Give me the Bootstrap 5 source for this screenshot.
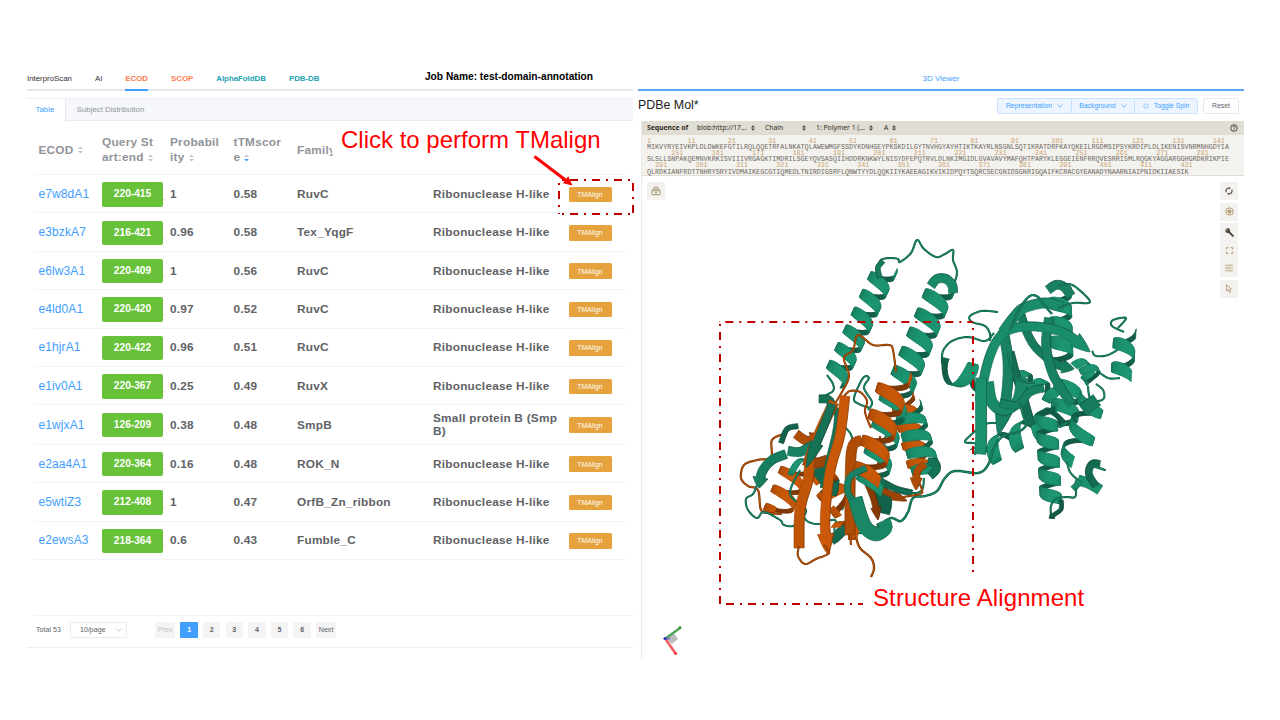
<!DOCTYPE html>
<html lang="en">
<head>
<meta charset="utf-8">
<meta name="viewport" content="width=device-width, initial-scale=1">
<title>Domain annotation</title>
<link href="https://cdn.jsdelivr.net/npm/bootstrap@5.3.0/dist/css/bootstrap.min.css" rel="stylesheet">
<style>
body{width:1280px;height:720px;overflow:hidden;background:#fff;font-family:"Liberation Sans",Arial,sans-serif;font-size:7.85px;line-height:1.2;color:#303133}
.page{width:1280px;height:720px;padding:68px 36px 0 27px}
.pane-l{width:606px}
.pane-r{width:606px;margin-left:5px}
.tabs-main{height:22.5px;gap:23px;border-bottom:2px solid #e4e7ed;line-height:21px}
.tabs-main a,.tabs-sub a{text-decoration:none;white-space:nowrap}
.tabs-main a:not(.or):not(.te),.tabs-main a:not(.or):not(.te):hover{color:#303133}
.tabs-main a.or{color:#ff7a4d;font-weight:700}
.tabs-main a.te{color:#22a2b2;font-weight:700}
.tabs-main .on{border-bottom:2px solid #409eff;height:22.5px}
.jobname{font-size:10.2px;font-weight:700;color:#000;line-height:17px;margin-left:82.5px}
.tabs-sub{margin-top:7px;height:23.5px;background:#f5f7fa;border-top:1px solid #eceff4;border-bottom:1px solid #e9ecf2;line-height:22.5px}
.tabs-sub a{color:#909399;padding-left:11px}
.tabs-sub a.on{background:#fff;color:#409eff;padding:0 10.5px 0 8.5px;height:23.5px;border-right:1px solid #e4e7ed}
.results{width:592px;margin:0 0 0 6px;table-layout:fixed;--bs-table-bg:transparent;font-size:11.8px;letter-spacing:.24px;font-weight:700;color:#606266;line-height:13px;border-collapse:separate;border-spacing:0}
.results>thead>tr>th{height:54px;padding:5px 0 0 5.5px;color:#909399;line-height:15px;vertical-align:middle;border:0;border-bottom:1px solid #f3f4f8;white-space:nowrap}
.results>tbody>tr>td{height:38.4px;padding:1.4px 0 0 5.5px;color:#606266;vertical-align:middle;border:0;border-bottom:1px solid #f3f4f8;white-space:nowrap}
.results tbody tr.tall td{height:39.4px}
.results .sup{padding-left:6px!important}
.results a.hit{font-weight:400;color:#409eff;font-size:12px;letter-spacing:.1px;text-decoration:none}
.span-tag{display:inline-block;width:61px;height:24.5px;line-height:24px;background:#67c23a;border-radius:2px;color:#fff;font-size:10.2px;letter-spacing:0;text-align:center;vertical-align:middle}
.dotty{font-size:8px;letter-spacing:0;color:#a9acb2;font-weight:400;vertical-align:-3px}
.tm{width:43px;height:15.5px;padding:0;line-height:15px;font-size:6.8px;letter-spacing:.05px;color:#fff;background:#e6a23c;border:0;border-radius:1.5px;display:block;--bs-btn-color:#fff}
.sorter{width:5px;height:8px;margin-left:4px;vertical-align:-.5px}
.pager{margin:55px 0 0 6px;width:600px;border-top:1px solid #f3f4f8;height:32.5px;font-size:7.1px;color:#606266;padding:6.2px 0 0 3px}
.pager span{height:15.5px;line-height:16px}
.pg{background:#f4f4f5;border-radius:1px;text-align:center;width:17.5px;margin-right:5.1px;font-weight:700}
.pg.wide{width:20.3px;font-weight:400}
.pg.cur{background:#409eff;color:#fff}
.sel{border:1px solid #eaecf0;width:57px;margin-left:8.5px;margin-right:28px;padding:0 4px 0 9px;line-height:14px!important;border-radius:2px}
.bottomline{height:1px;background:#eceef1}
.viewtab{height:22.5px;border-bottom:2px solid #58a7fb;color:#409eff;font-size:8px;line-height:21px}
.toolbar-r{height:30.5px;padding:7.5px 5px 0 0}
.toolbar-r h1{font-size:12.4px;font-weight:400;color:#222;margin:0;line-height:15px}
.btn-mini{height:16px;padding:0;font-size:6.8px;line-height:14px;border:1px solid #c6e2ff;border-radius:1.5px;background:#ecf5ff;color:#409eff;display:flex;align-items:center;justify-content:center;gap:5px}
.btn-mini.plain{background:#fff;border-color:#e6e8ec;color:#606266;width:36px;margin-left:5px}
.mol{margin-left:3px;width:603px;height:539px;border-left:1px solid #ecebe8;position:relative}
.seqhead{height:13.5px;background:#e0ddd4;font-family:"Noto Sans","Open Sans",sans-serif;font-size:6.8px;color:#332b1f;padding-left:5px}
.seqhead i{font-style:normal}
.seqbody{height:41.5px;background:#f3f2ee;border-bottom:1px solid #e0ddd4;padding:3.2px 0 0 5px;font-family:"Liberation Mono",monospace;font-size:6.745px}
.seqbody div{white-space:pre;height:6.2px;line-height:6.2px;color:#6e695f}
.seqbody .nr{color:#cba273}
.scene{display:block;position:absolute;left:0;top:55px}
.tools{position:absolute;left:578px;top:61px;width:18px}
.tools div,.lockbtn{background:#f3f2ee;display:flex;flex-direction:column;align-items:center;justify-content:space-around}
.lockbtn{position:absolute;left:5px;top:61px;width:18px;height:18px}
.over{position:absolute;left:0;top:0;pointer-events:none}
.note{position:absolute;color:#f00;font-size:24px;line-height:28px;white-space:nowrap;background:#fff}
</style>
</head>
<body>
<main class="page d-flex align-items-start position-relative">
  <section class="pane-l">
    <nav class="tabs-main d-flex">
      <a href="#">InterproScan</a><a href="#">AI</a><a href="#" class="or on">ECOD</a><a href="#" class="or">SCOP</a><a href="#" class="te">AlphaFoldDB</a><a href="#" class="te">PDB-DB</a>
      <span class="jobname">Job Name: test-domain-annotation</span>
    </nav>
    <nav class="tabs-sub d-flex"><a href="#" class="on">Table</a><a href="#">Subject Distribution</a></nav>
    <table class="table results">
      <colgroup><col style="width:63.5px"><col style="width:68px"><col style="width:63.5px"><col style="width:63.5px"><col style="width:135.5px"><col style="width:136px"><col></colgroup>
      <thead><tr>
        <th>ECOD<svg class="sorter" viewBox="0 0 5 8"><path d="M0 3L2.5 .5 5 3zM0 5L2.5 7.5 5 5z" fill="#c0c4cc"/></svg></th>
        <th>Query St<br>art:end<svg class="sorter" viewBox="0 0 5 8"><path d="M0 3L2.5 .5 5 3zM0 5L2.5 7.5 5 5z" fill="#c0c4cc"/></svg></th>
        <th>Probabil<br>ity<svg class="sorter" viewBox="0 0 5 8"><path d="M0 3L2.5 .5 5 3zM0 5L2.5 7.5 5 5z" fill="#c0c4cc"/></svg></th>
        <th>tTMscor<br>e<svg class="sorter" viewBox="0 0 5 8"><path d="M0 3L2.5 .5 5 3z" fill="#c0c4cc"/><path d="M0 5L2.5 7.5 5 5z" fill="#409eff"/></svg></th>
        <th>Family</th><th></th><th></th>
      </tr></thead>
      <tbody id="rows"></tbody>
    </table>
    <div class="pager d-flex">
      <span style="width:25.5px">Total 53</span>
      <span class="sel d-flex justify-content-between align-items-center">10/page<svg width="6" height="4" viewBox="0 0 6 4"><path d="M.5 .5L3 3.2 5.5 .5" fill="none" stroke="#c0c4cc" stroke-width=".8"/></svg></span>
      <span class="pg wide" style="color:#c0c4cc">Prev</span><span class="pg cur">1</span><span class="pg">2</span><span class="pg">3</span><span class="pg">4</span><span class="pg">5</span><span class="pg">6</span><span class="pg wide">Next</span>
    </div>
    <div class="bottomline"></div>
  </section>

  <section class="pane-r">
    <div class="viewtab text-center">3D Viewer</div>
    <div class="toolbar-r d-flex">
      <h1 class="me-auto">PDBe Mol*</h1>
      <div class="btn-group">
        <button class="btn btn-mini" style="width:75px">Representation<svg width="6" height="4" viewBox="0 0 6 4"><path d="M.5 .5L3 3.2 5.5 .5" fill="none" stroke="#409eff" stroke-width=".7"/></svg></button>
        <button class="btn btn-mini" style="width:64px">Background<svg width="6" height="4" viewBox="0 0 6 4"><path d="M.5 .5L3 3.2 5.5 .5" fill="none" stroke="#409eff" stroke-width=".7"/></svg></button>
        <button class="btn btn-mini" style="width:64px"><svg width="6" height="6" viewBox="0 0 6 6"><circle cx="3" cy="3" r="2.1" fill="none" stroke="#409eff" stroke-width=".9" stroke-dasharray="1 .65"/></svg>Toggle Spin</button>
      </div>
      <button class="btn btn-mini plain">Reset</button>
    </div>
    <div class="mol">
      <div class="seqhead d-flex align-items-center" id="seqhead">
        <b style="width:50px">Sequence of</b><i style="width:54px">blob:http://17...</i><svg width="4" height="6" viewBox="0 0 4 6"><path d="M0 2.4L2 .2 4 2.4zM0 3.6L2 5.8 4 3.6z" fill="#4a4335"/></svg>
        <i style="width:37px;margin-left:10px">Chain</i><svg width="4" height="6" viewBox="0 0 4 6"><path d="M0 2.4L2 .2 4 2.4zM0 3.6L2 5.8 4 3.6z" fill="#4a4335"/></svg>
        <i style="width:53px;margin-left:10px">1: Polymer 1 (...</i><svg width="4" height="6" viewBox="0 0 4 6"><path d="M0 2.4L2 .2 4 2.4zM0 3.6L2 5.8 4 3.6z" fill="#4a4335"/></svg>
        <i style="width:8px;margin-left:11px">A</i><svg width="4" height="6" viewBox="0 0 4 6"><path d="M0 2.4L2 .2 4 2.4zM0 3.6L2 5.8 4 3.6z" fill="#4a4335"/></svg>
        <svg class="ms-auto" style="margin-right:6px" width="8" height="8" viewBox="0 0 8 8" fill="none" stroke="#332b1f" stroke-width=".8"><circle cx="4" cy="4" r="3.3"/><path d="M2.9 3.2a1.1 1.1 0 1 1 1.6 1c-.4.2-.5.4-.5.8M4 5.6v.7"/></svg>
      </div>
      <div class="seqbody" id="seq"></div>
      <svg class="scene" width="602" height="484" viewBox="642 176 602 484"><g id="protein"></g>
        <path d="M665 638l8-6 5 7-6 5z" fill="#bbb"/><path d="M665.5 638.5L680 628" stroke="#55a558" stroke-width="2.4"/><path d="M665.5 639L675.5 653.5" stroke="#f06060" stroke-width="2.6"/><path d="M664 638.7h6" stroke="#6a6ad0" stroke-width="1.6"/><circle cx="665" cy="638.5" r="1.6" fill="#3434b8"/><circle cx="680" cy="627.7" r="1.4" fill="#2a8a30"/><circle cx="675.6" cy="653.6" r="1.5" fill="#e83c3c"/>
      </svg>
      <div class="lockbtn"><svg width="10" height="10" viewBox="0 0 10 10" fill="none" stroke="#a89878"><path d="M2.8 3V2a1.4 1.4 0 0 1 1.4-1h1.6A1.4 1.4 0 0 1 7.2 2v1M1.2 4.6L2.5 3h5l1.3 1.6"/><path d="M1 4.7h8v4H1z"/><path d="M5 5.3v2.6M3.8 6.6h2.4" stroke-width=".9"/></svg></div>
      <div class="tools">
        <div style="height:18px"><svg width="8" height="8" viewBox="0 0 8 8" fill="none" stroke="#4a4335" stroke-width="1.1"><path d="M1.2 5.2A3 3 0 0 1 4.6 1.1M6.8 2.8A3 3 0 0 1 3.4 6.9"/><path d="M4.2 0l1.6 1.3-1.6 1.3zM3.8 8L2.2 6.7l1.6-1.3z" fill="#4a4335" stroke="none"/></svg></div>
        <div style="height:18px;margin-top:2.5px"><svg width="9" height="9" viewBox="0 0 9 9" fill="none" stroke="#b0946c" stroke-width=".9"><circle cx="4.5" cy="4.5" r="3.7"/><circle cx="4.5" cy="4.5" r="1.4" fill="#b0946c"/><path d="M2 3.4v2.2M7 3.4v2.2M3.4 2h2.2M3.4 7h2.2" stroke-width=".5"/></svg></div>
        <div style="height:54px;margin-top:2.5px">
          <svg width="9" height="9" viewBox="0 0 9 9"><circle cx="2.7" cy="2.7" r="2.4" fill="#4a4335"/><path d="M3.5 3.5l4.4 4.4" stroke="#4a4335" stroke-width="1.9" stroke-linecap="round"/><path d="M.5 .8L2.4 2.6" stroke="#f3f2ee" stroke-width=".9"/></svg>
          <svg width="7" height="7" viewBox="0 0 7 7" fill="none" stroke="#b0946c" stroke-width=".9"><path d="M.5 2.3V.6h1.8M4.7 .6h1.8v1.7M6.5 4.7v1.7H4.7M2.3 6.4H.5V4.7"/></svg>
          <svg width="8" height="8" viewBox="0 0 8 8" fill="none" stroke="#b0946c" stroke-width=".8"><path d="M0 1.3h4.5M5.8 1.3H8M0 4h2M3.4 4H8M0 6.7h3.6M5 6.7h3M5.2 .2v2.2M2.7 2.9v2.2M4.4 5.6v2.2"/></svg>
        </div>
        <div style="height:18px;margin-top:2.5px"><svg width="8" height="9" viewBox="0 0 8 9" fill="none" stroke="#b0946c" stroke-width=".8"><path d="M1.5 .8v6.2l1.6-1.4 1.2 2.8 1.3-.6-1.2-2.6h2.1z"/></svg></div>
      </div>
    </div>
  </section>

  <div class="note" style="left:332px;top:126px;padding-left:9px">Click to perform TMalign</div>
  <div class="note" style="left:873px;top:584px;letter-spacing:.1px">Structure Alignment</div>
  <svg class="over" width="1280" height="720" fill="none" stroke="#c00000" stroke-width="2" stroke-dasharray="8 6 2 6">
    <path d="M719 322H973" stroke-dashoffset="15.7"/><path d="M973 322V573" stroke-dashoffset="8"/><path d="M720 322V604" stroke-dashoffset="12"/><path d="M720 604H863" stroke-dashoffset="16"/>
    <path d="M559 180H633" stroke-dashoffset="11"/><path d="M559 214H633" stroke-dashoffset="11"/><path d="M559 180V214" stroke-dashoffset="11"/><path d="M633 180V214" stroke-dashoffset="19"/>
    <path d="M534.5 156.5L566 180.5" stroke="#f00" stroke-width="3" stroke-dasharray="none"/><path d="M572.5 185.5L563 183.2 568.2 176.2z" fill="#f00" stroke="none"/>
  </svg>
</main>
<script src="https://cdn.jsdelivr.net/npm/bootstrap@5.3.0/dist/js/bootstrap.bundle.min.js"></script>
<script>
const hits=[["e7w8dA1","220-415","1","0.58","RuvC"],["e3bzkA7","216-421","0.96","0.58","Tex_YqgF"],["e6lw3A1","220-409","1","0.56","RuvC"],["e4ld0A1","220-420","0.97","0.52","RuvC"],["e1hjrA1","220-422","0.96","0.51","RuvC"],["e1iv0A1","220-367","0.25","0.49","RuvX"],["e1wjxA1","126-209","0.38","0.48","SmpB","Small protein B (Smp<br>B)"],["e2aa4A1","220-364","0.16","0.48","ROK_N"],["e5wtiZ3","212-408","1","0.47","OrfB_Zn_ribbon"],["e2ewsA3","218-364","0.6","0.43","Fumble_C"]];
document.getElementById("rows").innerHTML=hits.map(h=>`<tr class="${h[5]?"tall":""}"><td><a class="hit" href="#">${h[0]}</a></td><td><span class="span-tag">${h[1]}</span><span class="dotty">.</span></td><td>${h[2]}</td><td>${h[3]}</td><td>${h[4]}</td><td class="sup">${h[5]||"Ribonuclease H-like"}</td><td><button class="btn tm">TMAlign</button></td></tr>`).join("");

const seq=["MIKVYRYEIVKPLDLDWKEFGTILRQLQQETRFALNKATQLAWEWMGFSSDYKDNHGEYPKSKDILGYTNVHGYAYHTIKTKAYRLNSGNLSQTIKRATDRFKAYQKEILRGDMSIPSYKRDIPLDLIKENISVNRMNHGDYIA","SLSLLSNPAKQEMNVKRKISVIIIVRGAGKTIMDRILSGEYQVSASQIIHDDRKNKWYLNISYDFEPQTRVLDLNKIMGIDLGVAVAVYMAFQHTPARYKLEGGEIENFRRQVESRRISMLRQGKYAGGARGGHGRDKRIKPIE","QLRDKIANFRDTTNHRYSRYIVDMAIKEGCGTIQMEDLTNIRDIGSRFLQNWTYYDLQQKIIYKAEEAGIKVIKIDPQYTSQRCSECGNIDSGNRIGQAIFKCRACGYEANADYNAARNIAIPNIDKIIAESIK"];
document.getElementById("seq").innerHTML=seq.map((s,k)=>{let n="";for(let i=0;i<s.length;i++){const r=k*144+i+1;if(r%10===1)n=n.padEnd(i)+r}return`<div class="nr">${n}</div><div>${s}</div>`}).join("");

/* ribbon cartoon: coils are tubes, sheets are arrows, helices are shaded coiled bands */
const G=[28,152,116],O=[206,90,8];
const out=[];
const col=(c,k)=>`rgb(${c.map(v=>Math.round(Math.min(255,v*k))).join()})`;
const f=v=>v.toFixed(1);
function smooth(p,n=8){const r=[];for(let i=0;i<p.length-1;i++){const a=p[i-1]||p[i],b=p[i],c=p[i+1],d=p[i+2]||c;for(let j=0;j<n;j++){const t=j/n;r.push([0,1].map(q=>.5*(2*b[q]+(c[q]-a[q])*t+(2*a[q]-5*b[q]+4*c[q]-d[q])*t*t+(3*b[q]-a[q]-3*c[q]+d[q])*t*t*t)))}}r.push(p[p.length-1]);return r}
const pts=s=>s.split(" ").map(a=>a.split(",").map(Number));
function coil(c,s,w=2.1){const d="M"+smooth(pts(s)).map(a=>f(a[0])+" "+f(a[1])).join("L");out.push(`<path d="${d}" fill="none" stroke="${col(c,.58)}" stroke-width="${w}" stroke-linejoin="round"/><path d="${d}" fill="none" stroke="${col(c,.9)}" stroke-width="${w*.5}"/>`)}
function sheet(c,s,w,arrow=1,k=.93){const p=smooth(pts(s),6),n=p.length,L=[],R=[];
 p.forEach((a,i)=>{const q=p[Math.min(i+1,n-1)],o=p[Math.max(i-1,0)];let dx=q[0]-o[0],dy=q[1]-o[1];const m=Math.hypot(dx,dy)||1;dx/=m;dy/=m;let h=w/2;
  if(arrow&&i>=n-5){if(i===n-5){L.push([a[0]-dy*h,a[1]+dx*h]);R.push([a[0]+dy*h,a[1]-dx*h])}h=w*.85*(n-1-i)/4}
  L.push([a[0]-dy*h,a[1]+dx*h]);R.push([a[0]+dy*h,a[1]-dx*h])});
 const T=a=>a.map(v=>f(v[0])+" "+f(v[1])).join("L");
 out.push(`<path d="M${T(L.concat(R.slice().reverse()))}Z" fill="${col(c,k)}" stroke="${col(c,k*.8)}" stroke-width=".6"/><path d="M${T(R)}" fill="none" stroke="${col(c,k*.65)}" stroke-width="1" opacity=".55"/>`)}
function helix(c,x1,y1,x2,y2,turns,r,w,ph=0,tilt=-.25){const L=Math.hypot(x2-x1,y2-y1),ux=(x2-x1)/L,uy=(y2-y1)/L,vx=-uy,vy=ux,N=Math.round(turns*30),q=[];
 const P=(t,o)=>{const a=ph+t*turns*2*Math.PI,sn=Math.sin(a),z=t*L+o*w/2*(.72+.33*sn)+tilt*r*sn,s=r*Math.cos(a);return[x1+ux*z+vx*s,y1+uy*z+vy*s]};
 for(let i=0;i<N;i++){const t=i/N,u=(i+1.15)/N,a=ph+(t+u)/2*turns*2*Math.PI;q.push({z:Math.sin(a),e:Math.cos(a),a:[P(t,-1),P(u,-1),P(u,1),P(t,1)]})}
 q.sort((a,b)=>a.z-b.z).forEach(g=>{const k=g.z<0?.6+.08*(1+g.z):.7+.27*Math.sqrt(g.z)-.04*g.e,d=g.a.map(v=>f(v[0])+" "+f(v[1])),cc=col(c,k);
  out.push(`<path d="M${d.join("L")}Z" fill="${cc}" stroke="${cc}" stroke-width=".6"/><path d="M${d[0]}L${d[1]}M${d[2]}L${d[3]}" stroke="${col(c,k*.8)}" stroke-width=".5"/>`)})}

/* right domain */
coil(G,"998,312 982,311 970,316 972,322 985,326 990,334 990,341");
coil(G,"942,364 943,351 952,341 968,337 985,341 994,333");
coil(G,"998,423 985,424 973,433 965,442 976,444 975,455");
helix(G,1060,292,1062,362,3.6,11,13,2.8);
helix(G,1078,364,1093,378,1.2,8,8,1);
helix(G,1018,378,1056,396,2.2,9,11,1);
helix(G,1068,386,1063,425,2,14,12,0);
helix(G,1092,398,1074,458,2.2,14,11,.3,.3);
helix(G,980,458,1060,414,3.6,12,12,3,-.4);
helix(G,1046,408,1051,502,5.2,10.5,12,2.8,.1);
helix(G,945,370,985,380,1.5,13,13,3.6,.4);
sheet(G,"1020,312 1028,335 1038,350 1056,364 1074,369",8,1,.8);
sheet(G,"1049,318 1046,345 1052,372 1062,390 1072,404",9,0,.85);
sheet(G,"1010,352 1016,375 1024,400 1031,425",8,0,.72);
sheet(G,"1003,330 1008,362 1006,398 998,435",10,1,.85);
sheet(G,"1022,378 1018,400 1004,410 992,402 988,382",11,0,.9);
sheet(G,"980,400 988,362 999,338 1015,328 1040,327 1066,334 1090,352",9,1,.93);
sheet(G,"1003,332 1015,316 1024,308 1045,303 1063,307",10,0,.92);
sheet(G,"981,378 981,410 981,440 980,454",11,0,.95);
sheet(G,"1000,403 1018,405 1030,392 1044,388",8,0,.85);
sheet(G,"1048,290 1056,285 1064,287 1071,296",9,0,.85);
coil(G,"1010,330 1020,308 1030,296 1038,297 1045,306 1052,314",2.4);
coil(G,"1058,286 1068,284 1077,288 1090,302 1073,303 1058,308");
coil(G,"1008,353 1012,372 1022,381 1035,383");
coil(G,"1092,351 1096,356 1108,355 1120,348 1128,342");
coil(G,"1096,370 1108,378 1120,378");
coil(G,"1096,384 1103,390 1104,398 1098,401 1090,398 1088,386");
helix(G,1125,332,1122,378,1.9,11,12,3.2,-.4);
coil(G,"1124,332 1112,326 1113,320 1126,318 1118,328");
helix(G,1088,368,1094,380,1.1,9,7,0);
sheet(G,"1083,410 1090,405 1097,400",13,0,.8);
coil(G,"1067,462 1070,472 1078,480 1084,484");
sheet(G,"1078,480 1090,484 1100,490",10,0,.95);
sheet(G,"1096,486 1089,474 1092,464 1100,464",7,0,.7);
coil(G,"1092,466 1105,470 1097,467");
sheet(G,"1073,489 1077,485 1079,480",6,0,.9);
coil(G,"1076,488 1075,497 1066,497 1056,499 1051,506 1051,516");
sheet(G,"1061,500 1061,509 1055,514 1049,518",4,1,.6);
coil(G,"1020,402 1023,415 1026,425 1018,432 1003,436 994,448 988,465 978,473 955,471 945,478 937,491 925,496 913,498 908,512 901,521 892,518 885,521",2.5);

/* aligned domain, back layer */
helix(G,885,270,834,380,6.2,12,11,2.6);
coil(G,"878,268 881,260 890,258 898,259 900,262 911,253 917,240 924,249 936,257 945,254 953,250 953,260 957,272 954,284");
sheet(G,"880,278 878,268 883,261",5,0,.8);
helix(G,941,288,902,384,5,14,12,2.9);
sheet(G,"931,286 937,279 946,279 952,285 953,293",9,0,.9);
coil(G,"827,375 833,384 833,391 824,398 834,410 838,430");
sheet(G,"819,399 829,400 833,410",8,0,.75);
coil(G,"868,410 872,402 864,388 869,378 863,378 854,398 859,404 870,408");
coil(O,"896,372 893,350 889,345 873,345 858,335 853,350 844,358 849,376 842,392 832,408");
coil(O,"844,396 850,391 860,392 867,401 865,412 871,428");
helix(O,797,464,776,516,2.8,14,9,2.6);
helix(G,792,466,812,470,1,9,6,0);
coil(O,"784,434 772,440 771,457 757,460 744,465 741,478 748,486 758,490 761,510 770,513 782,514",2.2);
coil(G,"757,485 753,494 746,499 748,510 757,518 764,512 780,520 784,525 795,525 806,510 790,494 800,470");
coil(G,"801,506 806,520 818,524 835,520 836,533 862,533");
coil(G,"846,428 852,438 847,455 851,480 842,510");
sheet(G,"798,426 787,429 781,443",5,0,.65);
sheet(G,"786,454 772,460 762,472 759,488",9,1,.82);
sheet(O,"796,434 808,441 821,434",9,1,.85);
sheet(G,"788,451 800,452 811,446",9,0,.85);
helix(O,820,478,845,508,2,14,12,1);
sheet(G,"816,468 826,480 836,496",13,1,.7);
sheet(O,"804,460 816,463 828,460",10,0,.75);
sheet(G,"848,524 838,535 831,540",10,0,.7);
helix(O,838,531,862,530,1.2,9,9,2);
sheet(G,"838,408 836,430 829,460 823,488",6,0,.75);
sheet(O,"834,402 823,425 811,455 808,480 800,510 799,548",10,0,.93);
sheet(G,"832,404 822,430 806,468",8,1,.75);
sheet(O,"862,440 852,448 850,490 850,535",10,0,.85);
sheet(O,"845,396 840,435 830,472 825,520 828,555",9.5,1,.98);
coil(O,"799,546 798,556 805,564 816,559 829,553 824,545");
coil(O,"850,533 851,545");
coil(O,"856,537 860,548 871,558 874,568 871,577",2.3);
sheet(G,"876,482 884,500 882,513",15,0,.65);
sheet(O,"866,480 874,500 878,520",6,1,.65);
sheet(O,"868,483 886,492 907,501",6,1,.75);
sheet(G,"879,480 896,489 912,493",6,0,.7);
coil(G,"898,489 913,493 922,490 924,478");
coil(O,"903,497 920,494 922,490 918,480");
coil(G,"889,430 884,442 888,452 886,463 878,464");
coil(O,"880,436 879,460 874,470");
/* long paired helices */
helix(O,902,398,921,470,4,12,9,2.9);
helix(G,908,408,927,474,3.9,14,10,2.9);
helix(G,899,384,869,490,4,15,11,2.6);
helix(O,896,376,866,481,4,15.5,12,2.6);
sheet(O,"925,464 917,472 916,490",7,1,.85);
sheet(G,"928,462 935,463 936,470 930,476",8,0,.75);
sheet(G,"866,468 850,477 848,493 858,505",6,0,.85);
sheet(G,"855,498 860,515 866,528 876,534 885,528 883,521",14,0,.88);
document.getElementById("protein").innerHTML=out.join("");
</script>
</body>
</html>
